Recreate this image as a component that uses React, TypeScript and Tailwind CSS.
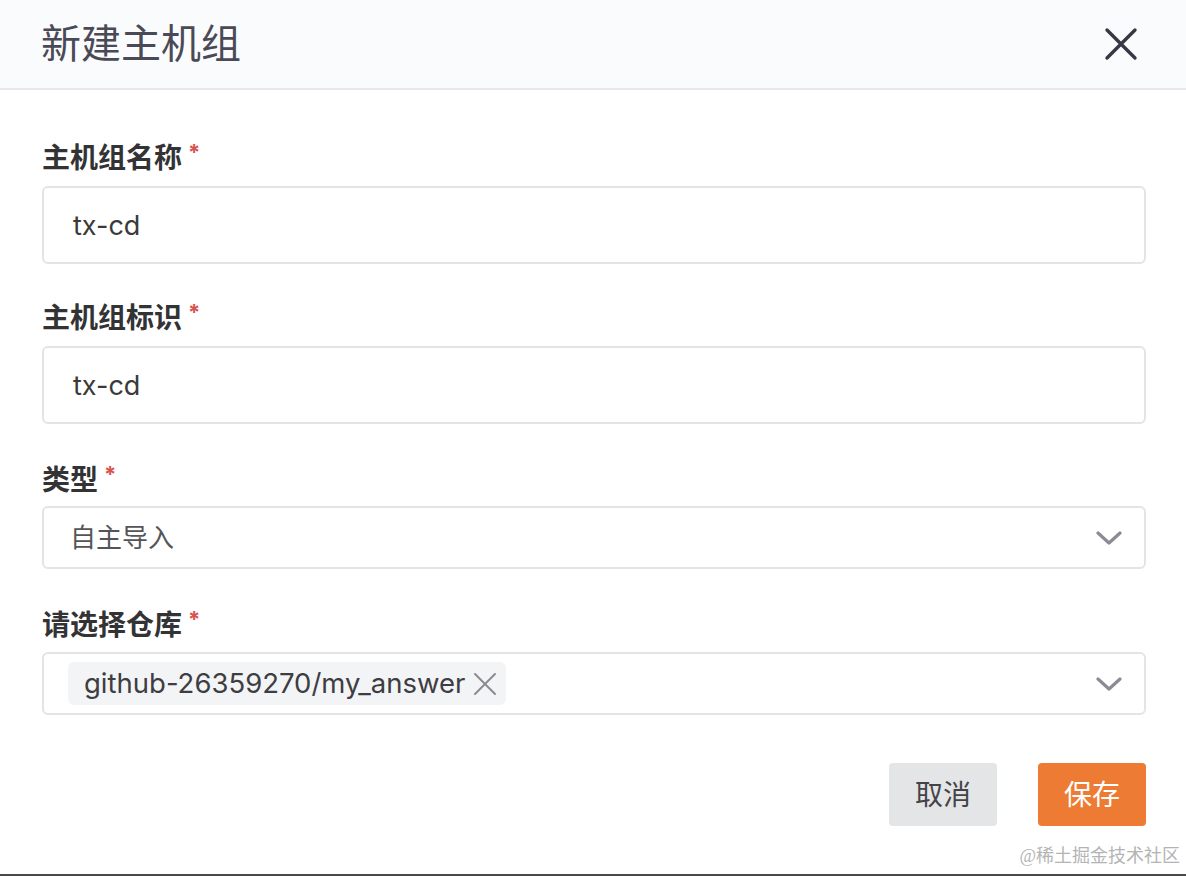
const cjk = "font-['Inter','Noto_Sans_CJK_SC',sans-serif]";

const Label = ({ text }: { text: string }) => (
  <div className="flex h-9 items-center">
    <span className="text-[28px] font-bold leading-9 text-[#333336]">{text}</span>
    <span className="ml-1.5 self-start text-[22px] font-bold leading-6 text-[#d9534f]">*</span>
  </div>
);

const Chevron = () => (
  <svg width="26" height="16" viewBox="0 0 26 16" fill="none">
    <path d="M2 3l11 10 11-10" stroke="#8b8b93" strokeWidth="3.2" strokeLinecap="round" strokeLinejoin="round" />
  </svg>
);

export default function App() {
  return (
    <div className={`relative flex h-[876px] w-full flex-col border-b-2 border-[#4a4a4a] bg-white ${cjk}`}>
      <div className="flex h-[90px] shrink-0 items-center justify-between border-b-2 border-[#e8e8ea] bg-[#fafbfc] pl-[41px] pr-[48px]">
        <h1 className="text-[40px] font-normal leading-none text-[#4a4a56]">新建主机组</h1>
        <svg width="34" height="34" viewBox="0 0 34 34" fill="none">
          <path d="M3 3l28 28M31 3L3 31" stroke="#383844" strokeWidth="3.4" strokeLinecap="round" />
        </svg>
      </div>

      <div className="flex flex-col pl-[42px] pr-[40px] pt-[50px]">
        <Label text="主机组名称" />
        <div className="mt-[10px] flex h-[78px] items-center rounded-md border-2 border-[#e4e4e6] px-[29px] pt-[3px]">
          <span className="text-[27px] text-[#3a3a3a]">tx-cd</span>
        </div>

        <div className="mt-[36px]">
          <Label text="主机组标识" />
        </div>
        <div className="mt-[10px] flex h-[78px] items-center rounded-md border-2 border-[#e4e4e6] px-[29px] pt-[3px]">
          <span className="text-[27px] text-[#3a3a3a]">tx-cd</span>
        </div>

        <div className="mt-[38px]">
          <Label text="类型" />
        </div>
        <div className="mt-[8px] flex h-[63px] items-center justify-between rounded-md border-2 border-[#e4e4e6] pl-[26px] pr-[22px]">
          <span className="text-[26px] text-[#555558]">自主导入</span>
          <Chevron />
        </div>

        <div className="mt-[38px]">
          <Label text="请选择仓库" />
        </div>
        <div className="mt-[9px] flex h-[63px] items-center justify-between rounded-md border-2 border-[#e4e4e6] pl-[24px] pr-[22px]">
          <div className="flex h-[43px] items-center rounded-md bg-[#f3f4f6] pl-[16px] pr-[9px]">
            <span className="text-[27.5px] text-[#3d3d42]">github-26359270/my_answer</span>
            <svg className="ml-[8px]" width="24" height="24" viewBox="0 0 24 24" fill="none">
              <path d="M2 2l20 20M22 2L2 22" stroke="#8a8a90" strokeWidth="2" strokeLinecap="round" />
            </svg>
          </div>
          <Chevron />
        </div>

        <div className="mt-[48px] flex justify-end gap-[41px]">
          <button className="flex h-[63px] w-[108px] items-center justify-center rounded bg-[#e4e5e7] text-[28px] text-[#444448]">
            取消
          </button>
          <button className="flex h-[63px] w-[108px] items-center justify-center rounded bg-[#ee7b33] text-[28px] text-white">
            保存
          </button>
        </div>
      </div>

      <span className="absolute bottom-[6px] right-[6px] font-['Liberation_Serif','Noto_Sans_CJK_SC',serif] text-[18px] leading-6 text-[#b4b4b4]">
        @稀土掘金技术社区
      </span>
    </div>
  );
}
